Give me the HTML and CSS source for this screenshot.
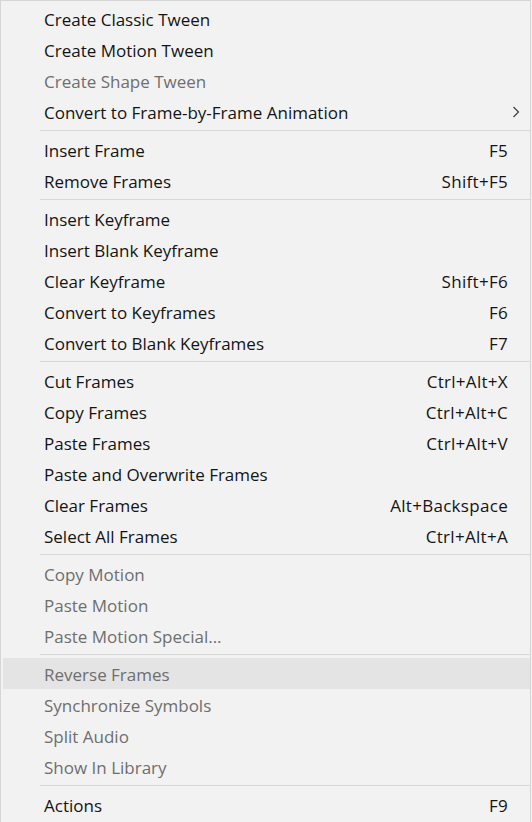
FILE: index.html
```html
<!DOCTYPE html>
<html lang="en">
<head>
<meta charset="utf-8">
<title>Timeline context menu</title>
<link rel="stylesheet" href="styles.css">
</head>
<body>
<div class="menu">
  <div class="item"><span class="label">Create Classic Tween</span></div>
  <div class="item"><span class="label">Create Motion Tween</span></div>
  <div class="item disabled"><span class="label">Create Shape Tween</span></div>
  <div class="item"><span class="label">Convert to Frame-by-Frame Animation</span>
    <svg class="arrow" width="8" height="12" viewBox="0 0 8 12"><path d="M1.5 1 L6.5 6 L1.5 11" fill="none" stroke="#3a3a3a" stroke-width="1.1"/></svg>
  </div>
  <div class="sep"></div>
  <div class="item"><span class="label">Insert Frame</span><span class="key">F5</span></div>
  <div class="item"><span class="label">Remove Frames</span><span class="key">Shift+F5</span></div>
  <div class="sep"></div>
  <div class="item"><span class="label">Insert Keyframe</span></div>
  <div class="item"><span class="label">Insert Blank Keyframe</span></div>
  <div class="item"><span class="label">Clear Keyframe</span><span class="key">Shift+F6</span></div>
  <div class="item"><span class="label">Convert to Keyframes</span><span class="key">F6</span></div>
  <div class="item"><span class="label">Convert to Blank Keyframes</span><span class="key">F7</span></div>
  <div class="sep"></div>
  <div class="item"><span class="label">Cut Frames</span><span class="key">Ctrl+Alt+X</span></div>
  <div class="item"><span class="label">Copy Frames</span><span class="key">Ctrl+Alt+C</span></div>
  <div class="item"><span class="label">Paste Frames</span><span class="key">Ctrl+Alt+V</span></div>
  <div class="item"><span class="label">Paste and Overwrite Frames</span></div>
  <div class="item"><span class="label">Clear Frames</span><span class="key">Alt+Backspace</span></div>
  <div class="item"><span class="label">Select All Frames</span><span class="key">Ctrl+Alt+A</span></div>
  <div class="sep"></div>
  <div class="item disabled"><span class="label">Copy Motion</span></div>
  <div class="item disabled"><span class="label">Paste Motion</span></div>
  <div class="item disabled"><span class="label">Paste Motion Special...</span></div>
  <div class="sep"></div>
  <div class="item disabled hover"><span class="label">Reverse Frames</span></div>
  <div class="item disabled"><span class="label">Synchronize Symbols</span></div>
  <div class="item disabled"><span class="label">Split Audio</span></div>
  <div class="item disabled"><span class="label">Show In Library</span></div>
  <div class="sep"></div>
  <div class="item"><span class="label">Actions</span><span class="key">F9</span></div>
</div>
</body>
</html>
```
FILE: styles.css
```css
html, body {
  margin: 0;
  padding: 0;
  background: #f2f2f2;
}
body {
  font-family: "Open Sans", "Noto Sans", sans-serif;
  font-size: 17px;
  color: #141414;
  overflow: hidden;
}
.menu {
  box-sizing: border-box;
  width: 531px;
  height: 830px;
  background: #f2f2f2;
  border: 1px solid #d6d6d6;
  padding: 2px 0 0 2px;
  display: flex;
  flex-direction: column;
}
.item {
  box-sizing: border-box;
  position: relative;
  height: 31px;
  flex: none;
  display: flex;
  align-items: center;
  justify-content: space-between;
  padding: 2px 22px 0 41px;
  white-space: nowrap;
}
.item.disabled {
  color: #6e6e6e;
}
.item.hover {
  background: #e4e4e4;
}
.arrow {
  position: absolute;
  right: 10px;
  top: 10px;
}
.key {
  letter-spacing: 0.3px;
}
.sep {
  height: 7px;
  flex: none;
  display: flex;
  align-items: center;
  padding-left: 37px;
}
.sep::before {
  content: "";
  display: block;
  flex: 1;
  height: 1px;
  background: #d8d8d8;
}
```
